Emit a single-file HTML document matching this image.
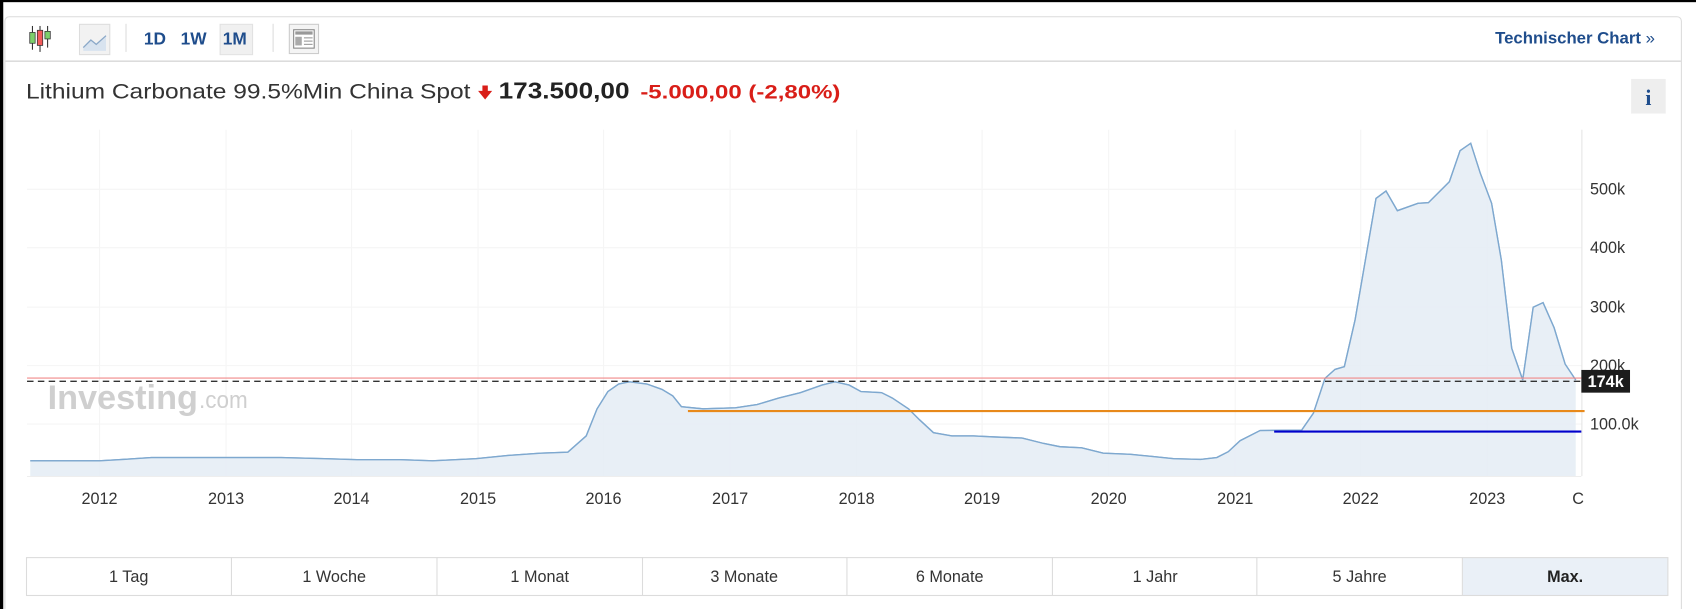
<!DOCTYPE html>
<html><head><meta charset="utf-8"><style>
html,body{margin:0;padding:0;background:#fff;width:1696px;height:609px;overflow:hidden}
svg{display:block}
text{font-family:"Liberation Sans",Arial,sans-serif}
</style></head><body>
<svg width="1696" height="609" viewBox="0 0 1568 563" preserveAspectRatio="none">
<rect x="0" y="0" width="1568" height="563" fill="#fff"/>
<rect x="0" y="0" width="1568" height="2" fill="#000"/>
<rect x="0" y="0" width="3" height="563" fill="#000"/>
<rect x="4.5" y="15.5" width="1550" height="560" rx="4" fill="#fff" stroke="#dcdcdc"/>
<g>
<line x1="30" y1="24" x2="30" y2="46" stroke="#333"/><rect x="27.5" y="30" width="5" height="10" fill="#7ccf6b" stroke="#333" stroke-width=".7"/>
<line x1="37" y1="24" x2="37" y2="48" stroke="#333"/><rect x="34.5" y="28" width="5" height="14" fill="#f25a5a" stroke="#333" stroke-width=".7"/>
<line x1="44" y1="24" x2="44" y2="44" stroke="#333"/><rect x="41.5" y="29" width="5" height="7" fill="#7ccf6b" stroke="#333" stroke-width=".7"/>
<rect x="73.5" y="22.5" width="28" height="28" fill="#f2f2f2" stroke="#ddd"/>
<path d="M77 44 L84 37 L89 41 L98 33 L98 47 L77 47Z" fill="#d8e3ef"/>
<path d="M77 44 L84 37 L89 41 L98 33" fill="none" stroke="#8aa8c8" stroke-width="1.2"/>
<line x1="116.5" y1="22" x2="116.5" y2="48" stroke="#ddd"/>
<rect x="203.5" y="22.5" width="30" height="28" fill="#f0f0f0" stroke="#e2e2e2"/>
<text x="133" y="41" font-size="16" font-weight="bold" fill="#1f4d8c">1D</text>
<text x="167" y="41" font-size="16" font-weight="bold" fill="#1f4d8c">1W</text>
<text x="206" y="41" font-size="16" font-weight="bold" fill="#1f4d8c">1M</text>
<line x1="252.5" y1="22" x2="252.5" y2="48" stroke="#ddd"/>
<rect x="267.5" y="22.5" width="27" height="27" fill="#f4f4f4" stroke="#ccc"/>
<rect x="271.5" y="27.5" width="19" height="17" fill="#fff" stroke="#888"/>
<rect x="273" y="29" width="16" height="3" fill="#999"/>
<rect x="273" y="34" width="6" height="8" fill="#aaa"/>
<line x1="281" y1="35" x2="289" y2="35" stroke="#999"/><line x1="281" y1="38" x2="289" y2="38" stroke="#999"/><line x1="281" y1="41" x2="289" y2="41" stroke="#999"/>
<text x="1530" y="40" font-size="15.5" font-weight="bold" fill="#1f4d8c" text-anchor="end">Technischer Chart <tspan font-weight="normal">»</tspan></text>
<line x1="5" y1="56.5" x2="1554" y2="56.5" stroke="#c8c8c8"/>
</g>
<text x="24" y="91" font-size="20" fill="#333" textLength="411" lengthAdjust="spacingAndGlyphs">Lithium Carbonate 99.5%Min China Spot</text>
<path d="M446 79 h5 v5 h4 l-6.5 8 l-6.5 -8 h4z" fill="#d91e18"/>
<text x="461" y="91" font-size="21" font-weight="bold" fill="#222" textLength="121" lengthAdjust="spacingAndGlyphs">173.500,00</text>
<text x="592" y="91" font-size="18" font-weight="bold" fill="#d91e18" textLength="185" lengthAdjust="spacingAndGlyphs">-5.000,00 (-2,80%)</text>
<rect x="1508" y="73" width="32" height="32" fill="#eee"/>
<text x="1524" y="97" font-size="20" font-weight="bold" fill="#1f4d8c" text-anchor="middle" style="font-family:'Liberation Serif',serif">i</text>
<g stroke="#f5f5f5" stroke-width="1">
<line x1="92" y1="120" x2="92" y2="440"/><line x1="209" y1="120" x2="209" y2="440"/><line x1="325" y1="120" x2="325" y2="440"/><line x1="442" y1="120" x2="442" y2="440"/><line x1="558" y1="120" x2="558" y2="440"/><line x1="675" y1="120" x2="675" y2="440"/><line x1="792" y1="120" x2="792" y2="440"/><line x1="908" y1="120" x2="908" y2="440"/><line x1="1025" y1="120" x2="1025" y2="440"/><line x1="1142" y1="120" x2="1142" y2="440"/><line x1="1258" y1="120" x2="1258" y2="440"/><line x1="1375" y1="120" x2="1375" y2="440"/>
<line x1="25" y1="175" x2="1462" y2="175"/><line x1="25" y1="229" x2="1462" y2="229"/><line x1="25" y1="284" x2="1462" y2="284"/><line x1="25" y1="338" x2="1462" y2="338"/><line x1="25" y1="392" x2="1462" y2="392"/>
</g>
<line x1="1462.5" y1="120" x2="1462.5" y2="440" stroke="#e4e4e4"/>
<line x1="25" y1="440.5" x2="1462" y2="440.5" stroke="#eee"/>
<text x="44" y="378" font-size="32" font-weight="bold" fill="#cfcfcf" textLength="139" lengthAdjust="spacingAndGlyphs">Investing</text>
<text x="184" y="377" font-size="22" fill="#cfcfcf" textLength="45" lengthAdjust="spacingAndGlyphs">.com</text>
<path id="ln" d="M28 426 L92 426 L110 425 L140 423 L200 423 L260 423 L300 424 L330 425 L370 425 L400 426 L440 424 L470 421 L500 419 L525 418 L542 403 L552 378 L562 362 L572 355 L582 353 L598 355 L612 360 L622 366 L630 376 L650 378 L680 377 L700 374 L720 368 L740 363 L760 356 L772 353 L785 356 L796 362 L815 363 L825 368 L840 378 L850 388 L863 400 L880 403 L900 403 L920 404 L945 405 L965 410 L980 413 L1000 414 L1020 419 L1045 420 L1065 422 L1085 424 L1110 424.7 L1125 423 L1135.6 417.6 L1146.5 407.4 L1165 398 L1203.5 397.6 L1214.3 382 L1225 349.8 L1234.3 341.5 L1242.9 339 L1252.8 295.9 L1272.2 183.4 L1281.4 176.6 L1291.9 194.8 L1311 188 L1320.6 187.4 L1331 177 L1340 168 L1349.9 139.3 L1359.7 132.5 L1368.5 160 L1379 187.9 L1388 240.4 L1397.6 322 L1407.8 351.3 L1417.5 284 L1426.6 279.8 L1436.8 303 L1447 336.6 L1456.8 351.3" fill="none" stroke="#7ea8cf" stroke-width="1.3"/>
<path d="M28 426 L92 426 L110 425 L140 423 L200 423 L260 423 L300 424 L330 425 L370 425 L400 426 L440 424 L470 421 L500 419 L525 418 L542 403 L552 378 L562 362 L572 355 L582 353 L598 355 L612 360 L622 366 L630 376 L650 378 L680 377 L700 374 L720 368 L740 363 L760 356 L772 353 L785 356 L796 362 L815 363 L825 368 L840 378 L850 388 L863 400 L880 403 L900 403 L920 404 L945 405 L965 410 L980 413 L1000 414 L1020 419 L1045 420 L1065 422 L1085 424 L1110 424.7 L1125 423 L1135.6 417.6 L1146.5 407.4 L1165 398 L1203.5 397.6 L1214.3 382 L1225 349.8 L1234.3 341.5 L1242.9 339 L1252.8 295.9 L1272.2 183.4 L1281.4 176.6 L1291.9 194.8 L1311 188 L1320.6 187.4 L1331 177 L1340 168 L1349.9 139.3 L1359.7 132.5 L1368.5 160 L1379 187.9 L1388 240.4 L1397.6 322 L1407.8 351.3 L1417.5 284 L1426.6 279.8 L1436.8 303 L1447 336.6 L1456.8 351.3 L1456.8 440 L28 440Z" fill="#e4ecf4" opacity=".85"/>
<use href="#ln"/>
<line x1="25" y1="349.5" x2="1462" y2="349.5" stroke="#f08a8a" stroke-width="1"/>
<line x1="25" y1="352.5" x2="1462" y2="352.5" stroke="#333" stroke-width="1.2" stroke-dasharray="6,4"/>
<line x1="636" y1="380" x2="1465" y2="380" stroke="#e8891a" stroke-width="2"/>
<line x1="1178" y1="399" x2="1462" y2="399" stroke="#0000cc" stroke-width="2"/>
<g font-size="15" fill="#333">
<text x="1470" y="180">500k</text><text x="1470" y="234">400k</text><text x="1470" y="289">300k</text><text x="1470" y="343">200k</text><text x="1470" y="397">100.0k</text>
</g>
<rect x="1462" y="342" width="45" height="21" fill="#1c1c1c"/>
<text x="1484.5" y="358" font-size="15" font-weight="bold" fill="#fff" text-anchor="middle">174k</text>
<g font-size="15" fill="#333" text-anchor="middle">
<text x="92" y="466">2012</text><text x="209" y="466">2013</text><text x="325" y="466">2014</text><text x="442" y="466">2015</text><text x="558" y="466">2016</text><text x="675" y="466">2017</text><text x="792" y="466">2018</text><text x="908" y="466">2019</text><text x="1025" y="466">2020</text><text x="1142" y="466">2021</text><text x="1258" y="466">2022</text><text x="1375" y="466">2023</text><text x="1459" y="466">C</text>
</g>
<rect x="1352.5" y="515.5" width="189.5" height="35" fill="#eaf0f7"/>
<rect x="24.5" y="515.5" width="1517.5" height="35" fill="none" stroke="#dcdcdc"/>
<g stroke="#dcdcdc"><line x1="214" y1="515" x2="214" y2="551"/><line x1="404" y1="515" x2="404" y2="551"/><line x1="594" y1="515" x2="594" y2="551"/><line x1="783" y1="515" x2="783" y2="551"/><line x1="973" y1="515" x2="973" y2="551"/><line x1="1162" y1="515" x2="1162" y2="551"/><line x1="1352" y1="515" x2="1352" y2="551"/></g>
<g font-size="15" fill="#333" text-anchor="middle">
<text x="119" y="538">1 Tag</text><text x="309" y="538">1 Woche</text><text x="499" y="538">1 Monat</text><text x="688" y="538">3 Monate</text><text x="878" y="538">6 Monate</text><text x="1068" y="538">1 Jahr</text><text x="1257" y="538">5 Jahre</text><text x="1447" y="538" font-weight="bold" fill="#222">Max.</text>
</g>
</svg>
</body></html>
